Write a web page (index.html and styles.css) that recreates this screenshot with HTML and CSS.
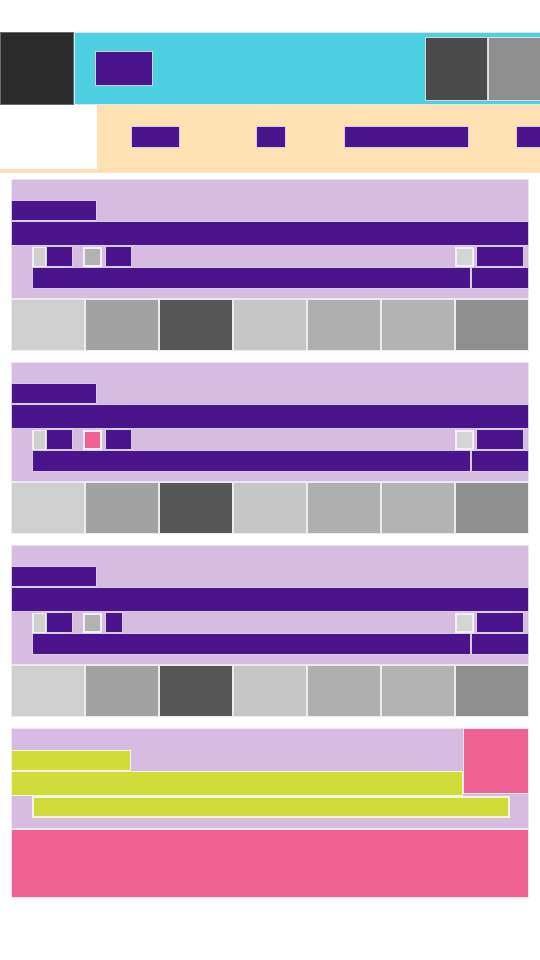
FILE: index.html
```html
<!DOCTYPE html>
<html lang="en">
<head>
<meta charset="utf-8">
<title>Layout</title>
<link rel="stylesheet" href="styles.css">
</head>
<body>
<div class="page">
  <header class="header">
    <div class="logo blk"></div>
    <div class="hero blk">
      <div class="hero-btn blk"></div>
      <div class="hero-imgs">
        <div class="hero-img dark blk"></div>
        <div class="hero-img mid blk"></div>
      </div>
    </div>
  </header>

  <nav class="nav">
    <div class="nav-logo blk"></div>
    <div class="nav-item w1 blk"></div>
    <div class="nav-item w2 blk"></div>
    <div class="nav-item w3 blk"></div>
    <div class="nav-item w4 blk"></div>
  </nav>

  <main class="main">
    <section class="post">
      <div class="card blk">
        <div class="title blk"></div>
        <div class="headline blk"></div>
        <div class="meta">
          <div class="sq blk sq-a"></div>
          <div class="tag blk"></div>
          <div class="sq blk sq-b"></div>
          <div class="tag blk"></div>
          <div class="spacer"></div>
          <div class="sq blk sq-c"></div>
          <div class="tag wide blk"></div>
        </div>
        <div class="bars">
          <div class="bar-main blk"></div>
          <div class="bar-side blk"></div>
        </div>
      </div>
      <div class="strip">
        <div class="cell c1 blk"></div><div class="cell c2 blk"></div><div class="cell c3 blk"></div><div class="cell c4 blk"></div><div class="cell c5 blk"></div><div class="cell c6 blk"></div><div class="cell c7 blk"></div>
      </div>
    </section>

    <section class="post">
      <div class="card blk">
        <div class="title blk"></div>
        <div class="headline blk"></div>
        <div class="meta">
          <div class="sq blk sq-a"></div>
          <div class="tag blk"></div>
          <div class="sq blk sq-pink"></div>
          <div class="tag blk"></div>
          <div class="spacer"></div>
          <div class="sq blk sq-c"></div>
          <div class="tag wide blk"></div>
        </div>
        <div class="bars">
          <div class="bar-main blk"></div>
          <div class="bar-side blk"></div>
        </div>
      </div>
      <div class="strip">
        <div class="cell c1 blk"></div><div class="cell c2 blk"></div><div class="cell c3 blk"></div><div class="cell c4 blk"></div><div class="cell c5 blk"></div><div class="cell c6 blk"></div><div class="cell c7 blk"></div>
      </div>
    </section>

    <section class="post">
      <div class="card blk">
        <div class="title blk"></div>
        <div class="headline blk"></div>
        <div class="meta">
          <div class="sq blk sq-a"></div>
          <div class="tag blk"></div>
          <div class="sq blk sq-b"></div>
          <div class="tag narrow blk"></div>
          <div class="spacer"></div>
          <div class="sq blk sq-c"></div>
          <div class="tag wide blk"></div>
        </div>
        <div class="bars">
          <div class="bar-main blk"></div>
          <div class="bar-side blk"></div>
        </div>
      </div>
      <div class="strip">
        <div class="cell c1 blk"></div><div class="cell c2 blk"></div><div class="cell c3 blk"></div><div class="cell c4 blk"></div><div class="cell c5 blk"></div><div class="cell c6 blk"></div><div class="cell c7 blk"></div>
      </div>
    </section>

    <section class="promo">
      <div class="promo-card blk">
        <div class="promo-top">
          <div class="promo-text">
            <div class="promo-title blk"></div>
            <div class="promo-headline blk"></div>
          </div>
          <div class="promo-badge blk"></div>
        </div>
        <div class="promo-bar blk"></div>
      </div>
      <div class="promo-foot blk"></div>
    </section>
  </main>
</div>
</body>
</html>
```

FILE: styles.css
```css
* { box-sizing: border-box; }

html, body {
  margin: 0;
  padding: 0;
  background: #ffffff;
  font-family: "Liberation Sans", Arial, sans-serif;
  overflow-x: hidden;
}

.page {
  width: 540px;
  padding-top: 32px;
  overflow: hidden;
}

.blk {
  border: 1px solid rgba(240, 236, 244, 0.85);
}

/* Header */
.header {
  display: flex;
  height: 73px;
}

.logo {
  width: 74px;
  flex-shrink: 0;
  background: #2b2b2b;
  border-color: #6a6a6a;
}

.hero {
  flex: 1;
  display: flex;
  align-items: center;
  padding-left: 20px;
  background: #4dd0e1;
  border-right: none;
  overflow: hidden;
}

.hero-btn {
  width: 58px;
  height: 35px;
  flex-shrink: 0;
  background: #4a148c;
}

.hero-imgs {
  display: flex;
  margin-left: 272px;
  flex-shrink: 0;
}

.hero-img {
  width: 63px;
  height: 64px;
}

.hero-img.dark { background: #4a4a4a; }
.hero-img.mid { width: 72px; background: #8e8e8e; }

/* Nav */
.nav {
  display: flex;
  align-items: flex-start;
  height: 68px;
  background: #ffe0b2;
  overflow: hidden;
}

.nav-logo {
  width: 97px;
  height: 64px;
  flex-shrink: 0;
  background: #ffffff;
  border: none;
}

.nav-item {
  height: 22px;
  margin-top: 21px;
  flex-shrink: 0;
  background: #4a148c;
}

.nav-item.w1 { width: 49px; margin-left: 34px; }
.nav-item.w2 { width: 30px; margin-left: 76px; }
.nav-item.w3 { width: 125px; margin-left: 58px; }
.nav-item.w4 { width: 60px; margin-left: 47px; }

/* Main */
.main {
  padding: 6px 11px 0;
}

.post {
  margin-bottom: 11px;
}

.card {
  height: 120px;
  padding-top: 20px;
  background: #d7bce1;
  display: flex;
  flex-direction: column;
}

.title {
  width: 86px;
  height: 21px;
  margin-left: -1px;
  background: #4a148c;
}

.headline {
  height: 25px;
  margin: 0 -1px;
  background: #4a148c;
}

.meta {
  display: flex;
  align-items: center;
  height: 21px;
  margin-left: 20px;
  margin-right: 4px;
}

.sq {
  height: 20px;
  flex-shrink: 0;
  border-color: #f2f0f4;
  border-width: 2px;
}

.sq-a { width: 14px; background: #d0d0d0; border-width: 1px 1px 1px 2px; }
.sq-b { width: 19px; margin-left: 10px; background: #b2b2b2; }
.sq-pink { width: 19px; margin-left: 10px; background: #f06292; }
.sq-c { width: 19px; background: #d5d5d5; }

.tag {
  width: 27px;
  height: 21px;
  flex-shrink: 0;
  background: #4a148c;
}

.sq-b + .tag, .sq-pink + .tag { margin-left: 3px; }
.tag.narrow { width: 18px; }
.tag.wide { width: 48px; margin-left: 2px; }

.spacer { flex: 1; }

.bars {
  display: flex;
  height: 22px;
  margin-left: 20px;
  margin-right: -1px;
}

.bar-main {
  flex: 1;
  background: #4a148c;
}

.bar-side {
  width: 58px;
  background: #4a148c;
}

.strip {
  display: grid;
  grid-template-columns: repeat(7, 1fr);
  height: 52px;
}

.cell { border-color: #ececec; }
.c1 { background: #cfcfcf; }
.c2 { background: #a2a2a2; }
.c3 { background: #565656; }
.c4 { background: #c6c6c6; }
.c5 { background: #afafaf; }
.c6 { background: #b3b3b3; }
.c7 { background: #8f8f8f; }

/* Promo */
.promo-card {
  background: #d7bce1;
  padding-bottom: 10px;
}

.promo-top {
  display: flex;
  margin: -1px -1px 0;
}

.promo-text {
  flex: 1;
  padding-top: 22px;
}

.promo-title {
  width: 120px;
  height: 21px;
  background: #cfdc3a;
  border-color: #f4f4e0;
}

.promo-headline {
  height: 25px;
  background: #cfdc3a;
  border-color: #f4f4e0;
}

.promo-badge {
  width: 66px;
  height: 66px;
  flex-shrink: 0;
  background: #f06292;
  border-color: #fbe4ec;
}

.promo-bar {
  width: 478px;
  height: 22px;
  margin-left: 20px;
  background: #cfdc3a;
  border-color: #f4f4e0;
  border-width: 2px;
}

.promo-foot {
  height: 69px;
  background: #f06292;
  border-color: #fbe4ec;
}
```
